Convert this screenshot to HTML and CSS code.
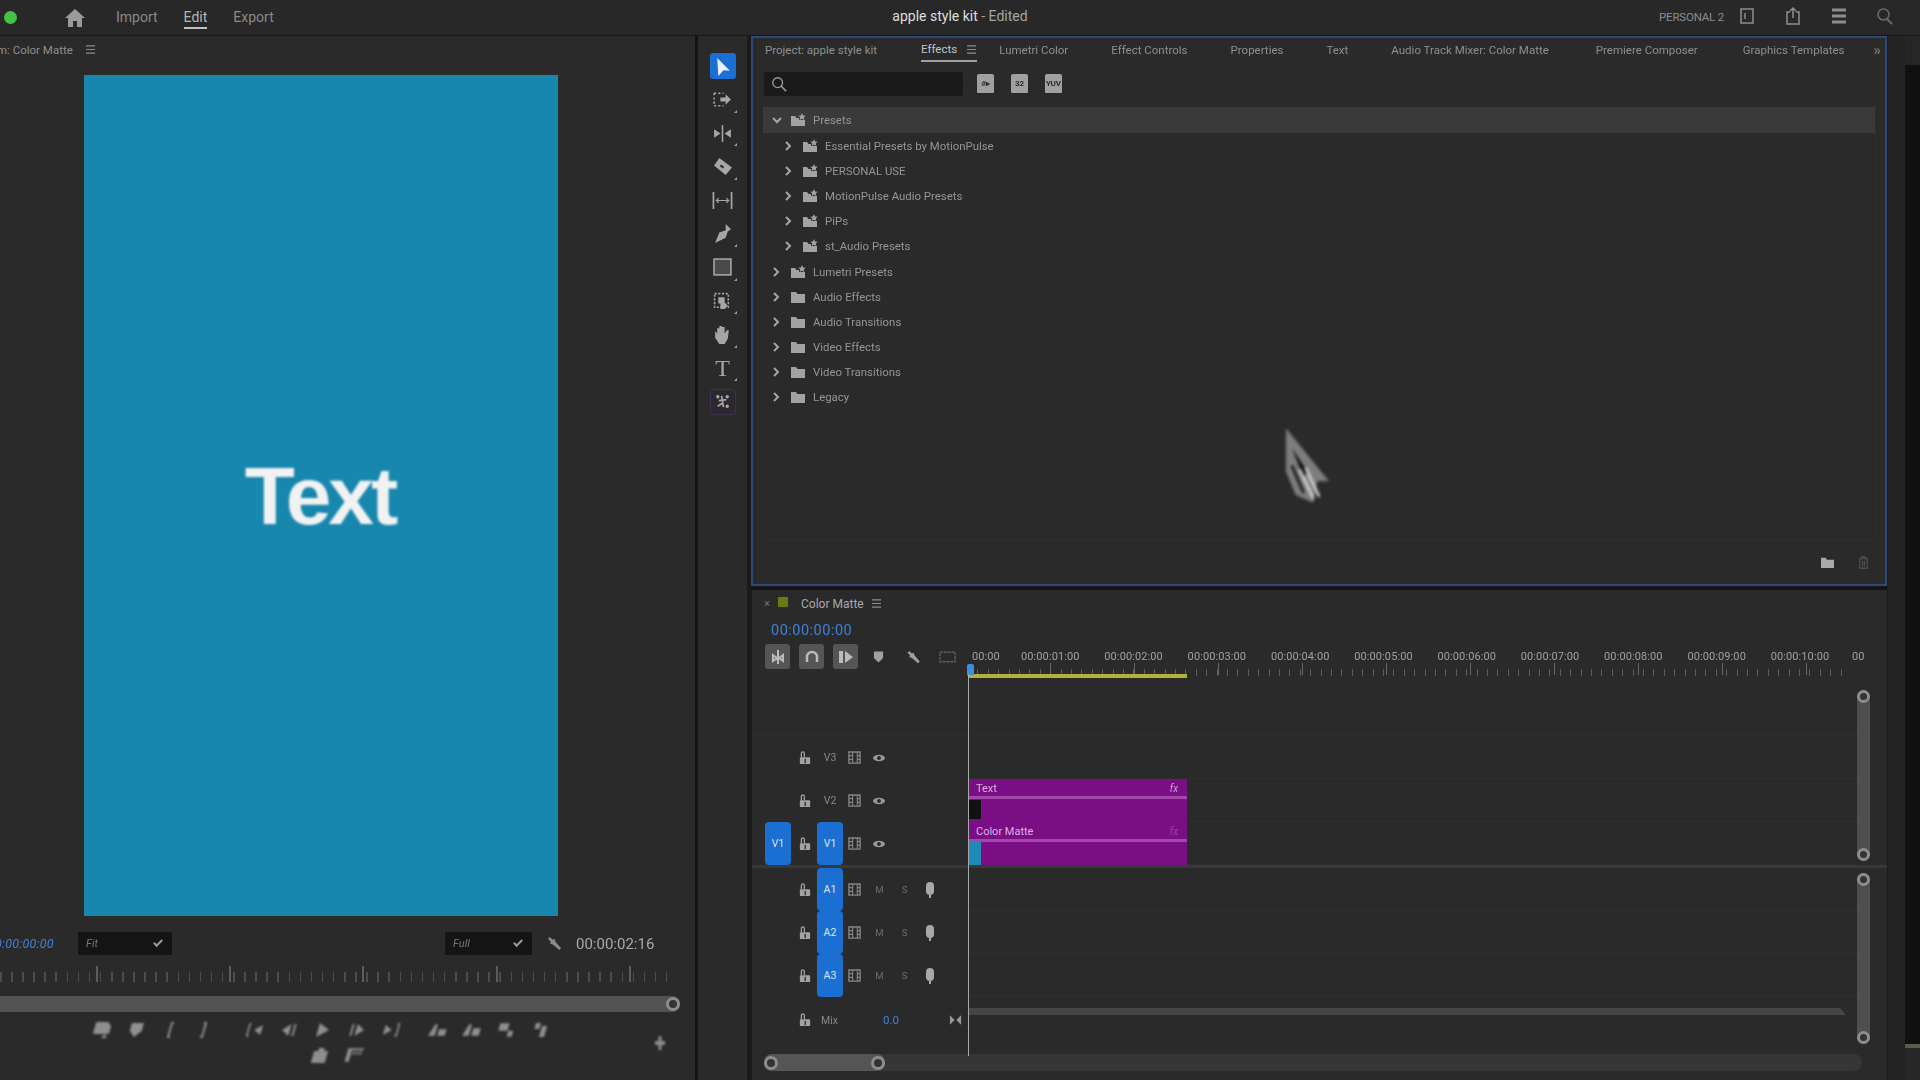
FILE: index.html
```html
<!DOCTYPE html>
<html lang="en">
<head>
    <meta charset="UTF-8">
    <title>apple style kit - Edited</title>
    <link rel="stylesheet" href="styles.css">
</head>
<body>
    <svg class="defs" width="0" height="0">
        <symbol id="i-folder" viewBox="0 0 16 14"><path d="M1 2h5l1.500 2H15v9H1z" fill="currentColor"/></symbol>
        <symbol id="i-starfolder" viewBox="0 0 16 14"><path d="M1 3h4l1.500 2H9v2h6v6H1z" fill="currentColor"/><path d="M12 0l1.100 2.400 2.600.3-1.900 1.700.5 2.600-2.300-1.300-2.300 1.300.5-2.600-1.900-1.700 2.600-.3z" fill="currentColor"/></symbol>
        <symbol id="i-right" viewBox="0 0 10 12"><path d="M3 2l4 4-4 4" fill="none" stroke="currentColor" stroke-width="2"/></symbol>
        <symbol id="i-down" viewBox="0 0 12 10"><path d="M2 3l4 4 4-4" fill="none" stroke="currentColor" stroke-width="2"/></symbol>
        <symbol id="i-lock" viewBox="0 0 14 16"><path d="M2 2.500a2.500 2.500 0 0 1 5 0V7H5.500V2.500a1 1 0 0 0-2 0V7H2z" fill="currentColor"/><rect x="1" y="7" width="12" height="8" rx="1" fill="currentColor"/><rect x="6.500" y="9" width="1.500" height="5" fill="#2a2a2a"/></symbol>
        <symbol id="i-film" viewBox="0 0 14 14"><path d="M1 1h12v12H1z" fill="none" stroke="currentColor" stroke-width="1.500"/><path d="M5 1v12M10 1v12M1 5h4M1 9h4M10 5h3M10 9h3" stroke="currentColor" stroke-width="1.200"/></symbol>
        <symbol id="i-eye" viewBox="0 0 16 10"><path d="M1 5c2-5 12-5 14 0-2 5-12 5-14 0z" fill="currentColor"/><circle cx="8" cy="5" r="2.200" fill="#2a2a2a"/></symbol>
        <symbol id="i-mic" viewBox="0 0 10 16"><rect x="1" y="0" width="8" height="13" rx="4" fill="currentColor"/><rect x="4" y="13" width="2" height="3" fill="currentColor"/></symbol>
        <symbol id="i-wrench" viewBox="0 0 16 16"><path d="M2 1l3 3 2-1 1 3 6 7-2 2-7-6-3-1 1-2-3-3z" fill="currentColor"/></symbol>
        <symbol id="i-menu" viewBox="0 0 12 10"><path d="M1 1h10M1 5h10M1 9h10" stroke="currentColor" stroke-width="1.200"/></symbol>
    </svg>

    <div class="app">
        <header class="topbar">
            <div class="topbar-left">
                <span class="dot"></span>
                <svg class="home" viewBox="0 0 20 18"><path d="M10 0L0 9h3v9h5v-6h4v6h5V9h3z" fill="currentColor"/></svg>
                <nav class="modes">
                    <span>Import</span>
                    <span class="active">Edit</span>
                    <span>Export</span>
                </nav>
            </div>
            <div class="doc-title"><b>apple style kit</b> - Edited</div>
            <div class="topbar-right">
                <span class="workspace">PERSONAL 2</span>
                <svg class="top-icon" viewBox="0 0 18 18"><rect x="3" y="2" width="12" height="14" fill="none" stroke="currentColor" stroke-width="1.500"/><path d="M7 6v6" stroke="currentColor" stroke-width="1.500"/></svg>
                <svg class="top-icon" viewBox="0 0 18 18"><path d="M6 5H3v12h12V5h-3" fill="none" stroke="currentColor" stroke-width="1.500"/><path d="M9 11V1M6 4l3-3 3 3" fill="none" stroke="currentColor" stroke-width="1.500"/></svg>
                <svg class="top-icon" viewBox="0 0 18 16"><path d="M2 2h14M2 8h14M2 14h14" stroke="currentColor" stroke-width="2.800"/></svg>
                <svg class="top-icon search-top" viewBox="0 0 18 18"><circle cx="7.500" cy="7.500" r="5.500" fill="none" stroke="currentColor" stroke-width="1.500"/><path d="M11 12l5 5" stroke="currentColor" stroke-width="2"/></svg>
            </div>
        </header>

        <main class="workspace-area">
            <section class="monitor">
                <div class="monitor-tab">
                    <span>m: Color Matte</span>
                    <svg class="menu"><use href="#i-menu"/></svg>
                </div>
                <div class="video-wrap">
                    <div class="video"><span>Text</span></div>
                </div>
                <div class="monitor-controls">
                    <span class="tc-left">00:00:00:00</span>
                    <span class="drop fit">Fit <i></i></span>
                    <span class="drop full">Full <i></i></span>
                    <svg class="mini-wrench"><use href="#i-wrench"/></svg>
                    <span class="tc-right">00:00:02:16</span>
                </div>
                <div class="monitor-ruler"></div>
                <div class="monitor-scroll"><span class="knob"></span></div>
                <div class="transport">
                    <div class="transport-row">
                        <span class="t-cell"><svg viewBox="0 0 20 18"><path d="M2 1h12l4 4v8H2z" fill="currentColor"/><path d="M14 13l3 4h-6z" fill="currentColor"/></svg></span>
                        <span class="t-cell"><svg viewBox="0 0 20 18"><path d="M4 2h12v8l-6 6-6-6z" fill="currentColor"/></svg></span>
                        <span class="t-cell"><svg viewBox="0 0 20 18"><path d="M12 1H9v16h3v-2h-1V3h1z" fill="currentColor"/></svg></span>
                        <span class="t-cell"><svg viewBox="0 0 20 18"><path d="M8 1h3v16H8v-2h1V3H8z" fill="currentColor"/></svg></span>
                        <span class="t-gap"></span>
                        <span class="t-cell"><svg viewBox="0 0 24 18"><path d="M6 1H3v16h3v-2H5V3h1zM20 3v12l-9-6z" fill="currentColor"/></svg></span>
                        <span class="t-cell"><svg viewBox="0 0 20 18"><path d="M11 3v12L3 9zM14 3h2v12h-2z" fill="currentColor"/></svg></span>
                        <span class="t-cell"><svg viewBox="0 0 20 18"><path d="M5 2l11 7-11 7z" fill="currentColor"/></svg></span>
                        <span class="t-cell"><svg viewBox="0 0 20 18"><path d="M9 3v12l8-6zM4 3h2v12H4z" fill="currentColor"/></svg></span>
                        <span class="t-cell"><svg viewBox="0 0 24 18"><path d="M18 1h3v16h-3v-2h1V3h-1zM4 3v12l9-6z" fill="currentColor"/></svg></span>
                        <span class="t-gap small"></span>
                        <span class="t-cell"><svg viewBox="0 0 24 18"><path d="M2 16l5-14h3v14zM13 8h9v8h-9z" fill="currentColor"/></svg></span>
                        <span class="t-cell"><svg viewBox="0 0 24 18"><path d="M2 16l5-14h3v14zM13 7h9v9h-9z" fill="currentColor"/></svg></span>
                        <span class="t-cell"><svg viewBox="0 0 24 18"><path d="M3 1h11v9H3zM15 10h6v7h-6z" fill="currentColor"/></svg></span>
                        <span class="t-cell"><svg viewBox="0 0 20 18"><path d="M4 2h5v6H4zM11 5h5v11h-5z" fill="currentColor"/></svg></span>
                    </div>
                    <div class="transport-row second">
                        <span class="t-cell"><svg viewBox="0 0 20 18"><path d="M3 5h14v12H3zM7 2h6v3H7z" fill="currentColor"/></svg></span>
                        <span class="t-cell"><svg viewBox="0 0 24 18"><path d="M3 1h5v16H3zM8 1h14v2H8zM10 4h2v5h-2zM14 4h2v5h-2zM18 4h2v5h-2z" fill="currentColor"/></svg></span>
                    </div>
                    <span class="t-plus"></span>
                </div>
            </section>

            <aside class="tools">
                <span class="tool selected"><svg viewBox="0 0 18 18"><path d="M4 1l12 12-6-.5L5 18z" fill="currentColor"/></svg></span>
                <span class="tool more-tools"><svg viewBox="0 0 20 18"><path d="M2 3h9M2 15h9M2 3v12" fill="none" stroke="currentColor" stroke-width="1.500" stroke-dasharray="2 2"/><path d="M8 7h5V4l5 5-5 5v-3H8z" fill="currentColor"/></svg></span>
                <span class="tool more-tools"><svg viewBox="0 0 20 18"><path d="M10 1v16" stroke="currentColor" stroke-width="1.500"/><path d="M8 9L2 5v8zM12 9l6-4v8z" fill="currentColor"/></svg></span>
                <span class="tool more-tools"><svg viewBox="0 0 20 18"><path d="M7 1l12 9-6 7-11-9z" fill="currentColor"/><path d="M8 8l3 2" stroke="#2a2a2a" stroke-width="2"/></svg></span>
                <span class="tool"><svg viewBox="0 0 22 18"><path d="M1.500 0v18M20.500 0v18" stroke="currentColor" stroke-width="1.800"/><path d="M5 9h12M7 6.500L4.500 9 7 11.500M15 6.500L17.500 9 15 11.500" fill="none" stroke="currentColor" stroke-width="1.200"/></svg></span>
                <span class="tool more-tools"><svg viewBox="0 0 18 18"><path d="M12 0l5 5-3 2-2 6-10 5 4-10 6-2z" fill="currentColor"/></svg></span>
                <span class="tool more-tools"><svg viewBox="0 0 18 18"><rect x="1" y="1" width="16" height="15" fill="#4a4a4a" stroke="currentColor" stroke-width="1.500"/></svg></span>
                <span class="tool more-tools"><svg viewBox="0 0 18 18"><rect x="1.500" y="1.500" width="13" height="13" fill="none" stroke="currentColor" stroke-width="1.500" stroke-dasharray="2 1.500"/><path d="M5 5h6v5l3 3-3 3H7V11H5z" fill="currentColor"/></svg></span>
                <span class="tool more-tools"><svg viewBox="0 0 18 18"><path d="M2 10V6l2 2V3h2v4V1h2.500v6V2H11v6l2-3h2l-1 8-3 5H6L2 12z" fill="currentColor"/></svg></span>
                <span class="tool type-tool more-tools">T</span>
                <span class="tool tool-last"><svg viewBox="0 0 18 18"><circle cx="4" cy="4" r="1.800" fill="currentColor"/><circle cx="14" cy="4" r="1.800" fill="currentColor"/><circle cx="14" cy="14" r="1.800" fill="currentColor"/><path d="M8 3l2 12M5 8l8-1M10 10l-6 4" fill="none" stroke="currentColor" stroke-width="1.800"/></svg></span>
            </aside>

            <div class="right-col">
                <section class="effects">
                    <div class="tabs">
                        <span>Project: apple style kit</span>
                        <span class="tab-active">Effects <svg class="menu"><use href="#i-menu"/></svg></span>
                        <span>Lumetri Color</span>
                        <span>Effect Controls</span>
                        <span>Properties</span>
                        <span>Text</span>
                        <span>Audio Track Mixer: Color Matte</span>
                        <span class="tab-pc">Premiere Composer</span>
                        <span class="tab-gt">Graphics Templates</span>
                        <span class="more">»</span>
                    </div>
                    <div class="search-row">
                        <div class="search-box">
                            <svg viewBox="0 0 18 18"><circle cx="7.500" cy="7.500" r="5.500" fill="none" stroke="currentColor" stroke-width="1.500"/><path d="M11.500 11.500L17 17" stroke="currentColor" stroke-width="1.800"/></svg>
                        </div>
                        <span class="badge">#▸</span>
                        <span class="badge">32</span>
                        <span class="badge">YUV</span>
                    </div>
                    <div class="tree">
                        <div class="row open"><svg class="chev"><use href="#i-down"/></svg><svg class="fld"><use href="#i-starfolder"/></svg>Presets</div>
                        <div class="row sub"><svg class="chev"><use href="#i-right"/></svg><svg class="fld"><use href="#i-starfolder"/></svg>Essential Presets by MotionPulse</div>
                        <div class="row sub"><svg class="chev"><use href="#i-right"/></svg><svg class="fld"><use href="#i-starfolder"/></svg>PERSONAL USE</div>
                        <div class="row sub"><svg class="chev"><use href="#i-right"/></svg><svg class="fld"><use href="#i-starfolder"/></svg>MotionPulse Audio Presets</div>
                        <div class="row sub"><svg class="chev"><use href="#i-right"/></svg><svg class="fld"><use href="#i-starfolder"/></svg>PiPs</div>
                        <div class="row sub"><svg class="chev"><use href="#i-right"/></svg><svg class="fld"><use href="#i-starfolder"/></svg>st_Audio Presets</div>
                        <div class="row"><svg class="chev"><use href="#i-right"/></svg><svg class="fld"><use href="#i-starfolder"/></svg>Lumetri Presets</div>
                        <div class="row"><svg class="chev"><use href="#i-right"/></svg><svg class="fld"><use href="#i-folder"/></svg>Audio Effects</div>
                        <div class="row"><svg class="chev"><use href="#i-right"/></svg><svg class="fld"><use href="#i-folder"/></svg>Audio Transitions</div>
                        <div class="row"><svg class="chev"><use href="#i-right"/></svg><svg class="fld"><use href="#i-folder"/></svg>Video Effects</div>
                        <div class="row"><svg class="chev"><use href="#i-right"/></svg><svg class="fld"><use href="#i-folder"/></svg>Video Transitions</div>
                        <div class="row"><svg class="chev"><use href="#i-right"/></svg><svg class="fld"><use href="#i-folder"/></svg>Legacy</div>
                    </div>
                    <div class="effects-foot">
                        <svg class="foot-icon"><use href="#i-folder"/></svg>
                        <svg class="foot-icon dim" viewBox="0 0 12 14"><path d="M1 3h10M4 3V1h4v2M2 3v10h8V3M5 5v6M7 5v6" fill="none" stroke="currentColor" stroke-width="1.200"/></svg>
                    </div>
                    <!-- mouse pointer caught mid move -->
                    <svg class="pointer" viewBox="0 0 48 80">
                        <path d="M2 2L46 56 34 56 30 78 12 70 2 46z" fill="#7d7d7d"/>
                        <path d="M8 22L24 46 20 52z" fill="#0e0e0e"/>
                        <path d="M16 44L30 74M22 42L36 72" stroke="#dedede" stroke-width="2.500"/>
                        <path d="M8 40L20 68" stroke="#1b1b1b" stroke-width="3"/>
                    </svg>
                </section>

                <section class="timeline">
                    <span class="playhead-line"></span>
                    <div class="seq-tab">
                        <span class="close">×</span>
                        <span class="swatch"></span>
                        <span class="seq-name">Color Matte</span>
                        <svg class="menu"><use href="#i-menu"/></svg>
                    </div>
                    <div class="seq-tc">00:00:00:00</div>
                    <div class="seq-bar">
                        <div class="seq-tools">
                            <span class="seq-btn"><svg viewBox="0 0 16 16"><path d="M8 1v14M3 6l4 3-4 3zM13 6L9 9l4 3z" fill="none" stroke="currentColor" stroke-width="2"/></svg></span>
                            <span class="seq-btn"><svg viewBox="0 0 16 16"><path d="M3 13V8a5 5 0 0 1 10 0v5" fill="none" stroke="currentColor" stroke-width="2.500"/></svg></span>
                            <span class="seq-btn"><svg viewBox="0 0 16 16"><path d="M1 2h4v12H1zM7 2l8 6-8 6z" fill="currentColor"/></svg></span>
                            <svg class="seq-ico marker" viewBox="0 0 12 14"><path d="M1 1h10v7l-5 5-5-5z" fill="currentColor"/></svg>
                            <svg class="seq-ico wrench"><use href="#i-wrench"/></svg>
                            <svg class="seq-ico cc" viewBox="0 0 18 12"><rect x="1" y="1" width="16" height="10" fill="none" stroke="currentColor" stroke-width="1.500" stroke-dasharray="3 1"/></svg>
                        </div>
                        <div class="ruler">
                            <div class="ruler-labels">
                                <span class="first">00:00</span>
                                <span>00:00:01:00</span>
                                <span>00:00:02:00</span>
                                <span>00:00:03:00</span>
                                <span>00:00:04:00</span>
                                <span>00:00:05:00</span>
                                <span>00:00:06:00</span>
                                <span>00:00:07:00</span>
                                <span>00:00:08:00</span>
                                <span>00:00:09:00</span>
                                <span>00:00:10:00</span>
                                <span class="last">00</span>
                            </div>
                            <div class="ticks"><span class="in-out"></span><span class="head"></span></div>
                        </div>
                    </div>

                    <div class="track-group video-tracks">
                        <div class="rows">
                            <div class="empty-track"></div>
                            <div class="track">
                                <div class="head"><span class="src"></span><svg class="lock"><use href="#i-lock"/></svg><span class="tname">V3</span><svg class="sync"><use href="#i-film"/></svg><svg class="eye"><use href="#i-eye"/></svg></div>
                                <div class="lane"></div>
                            </div>
                            <div class="track">
                                <div class="head"><span class="src"></span><svg class="lock"><use href="#i-lock"/></svg><span class="tname">V2</span><svg class="sync"><use href="#i-film"/></svg><svg class="eye"><use href="#i-eye"/></svg></div>
                                <div class="lane">
                                    <div class="clip"><div class="clip-title"><span>Text</span><em>fx</em></div><div class="clip-body"><span class="thumb black"></span></div></div>
                                </div>
                            </div>
                            <div class="track">
                                <div class="head"><span class="src on">V1</span><svg class="lock"><use href="#i-lock"/></svg><span class="tname on">V1</span><svg class="sync"><use href="#i-film"/></svg><svg class="eye"><use href="#i-eye"/></svg></div>
                                <div class="lane">
                                    <div class="clip"><div class="clip-title"><span>Color Matte</span><em class="faint">fx</em></div><div class="clip-body"><span class="thumb blue"></span></div></div>
                                </div>
                            </div>
                        </div>
                        <div class="vscroll v1"><span class="knob"></span><span class="knob"></span></div>
                    </div>

                    <div class="track-group audio-tracks">
                        <div class="rows">
                            <div class="track audio">
                                <div class="head"><span class="src"></span><svg class="lock"><use href="#i-lock"/></svg><span class="tname on">A1</span><svg class="sync"><use href="#i-film"/></svg><span class="ms">M</span><span class="ms">S</span><svg class="mic"><use href="#i-mic"/></svg></div>
                                <div class="lane"></div>
                            </div>
                            <div class="track audio">
                                <div class="head"><span class="src"></span><svg class="lock"><use href="#i-lock"/></svg><span class="tname on">A2</span><svg class="sync"><use href="#i-film"/></svg><span class="ms">M</span><span class="ms">S</span><svg class="mic"><use href="#i-mic"/></svg></div>
                                <div class="lane"></div>
                            </div>
                            <div class="track audio">
                                <div class="head"><span class="src"></span><svg class="lock"><use href="#i-lock"/></svg><span class="tname on">A3</span><svg class="sync"><use href="#i-film"/></svg><span class="ms">M</span><span class="ms">S</span><svg class="mic"><use href="#i-mic"/></svg></div>
                                <div class="lane"></div>
                            </div>
                            <div class="track mix">
                                <div class="head"><span class="src"></span><svg class="lock"><use href="#i-lock"/></svg><span class="tname">Mix</span><span class="mix-val">0.0</span><svg class="bow" viewBox="0 0 14 12"><path d="M1 1l5 5-5 5zM13 1L8 6l5 5z" fill="currentColor"/></svg></div>
                                <div class="lane"><span class="mix-bar"></span></div>
                            </div>
                        </div>
                        <div class="vscroll v2"><span class="knob"></span><span class="knob"></span></div>
                    </div>

                    <div class="hscroll">
                        <span class="hthumb"><span class="knob"></span><span class="knob"></span></span>
                    </div>
                </section>
            </div>

            <div class="dock"></div>
            <div class="far-right"><div class="far-dark"></div><div class="far-foot"></div></div>
        </main>
    </div>
</body>
</html>
```

FILE: styles.css
```css
:root {
  --panel: #2a2a2a;
  --panel-dark: #232323;
  --line: #313131;
  --gutter: #141414;
  --text: #9b9b9b;
  --icon: #a6a6a6;
  --blue: #1b6fd2;
  --tc-blue: #3f82d6;
  --focus: #2f4a78;
  --clip: #7a0f85;
}

* { box-sizing: border-box; }

body {
  margin: 0;
  width: 1920px;
  height: 1080px;
  overflow: hidden;
  background: var(--gutter);
  font-family: Roboto, "Liberation Sans", sans-serif;
  font-size: 12px;
  color: var(--text);
}

.defs { position: absolute; }

.app {
  width: 1920px;
  height: 1080px;
  display: flex;
  flex-direction: column;
  filter: blur(0.6px);
}

/* top bar */
.topbar {
  height: 36px;
  flex: none;
  display: grid;
  grid-template-columns: 1fr auto 1fr;
  align-items: center;
  background: #282828;
  border-bottom: 1px solid #141414;
}

.topbar-left { display: flex; align-items: center; }

.dot {
  width: 13px;
  height: 13px;
  margin-left: 4px;
  border-radius: 50%;
  background: #41c441;
}

.home { width: 20px; height: 18px; margin-left: 48px; color: #9a9a9a; }

.modes { display: flex; gap: 26px; margin-left: 31px; font-size: 14px; color: #8a8a8a; }
.modes span { line-height: 20px; }
.modes .active { color: #b5b5b5; border-bottom: 2px solid #c0c0c0; }

.doc-title { font-size: 14px; color: #a5a5a5; margin-top: -3px; }
.doc-title b { font-weight: 400; color: #dedede; }

.topbar-right { display: flex; align-items: center; justify-content: flex-end; }
.workspace { font-size: 11.500px; color: #8d8d8d; margin-right: 14px; letter-spacing: -0.2px; margin-top: -1px; }
.top-icon { width: 18px; height: 18px; margin-right: 28px; color: #8e8e8e; margin-top: -3px; }
.search-top { margin-right: 26px; color: #6b6b6b; }

.workspace-area { flex: 1; display: flex; min-height: 0; }

/* program monitor */
.monitor {
  width: 695px;
  flex: none;
  background: var(--panel);
  display: flex;
  flex-direction: column;
  overflow: hidden;
}

.monitor-tab {
  height: 39px;
  padding-bottom: 12px;
  display: flex;
  align-items: center;
  font-size: 11.500px;
  color: #8f8f8f;
}
.monitor-tab span { margin-left: -3px; width: 88px; white-space: nowrap; }
.menu { width: 11px; height: 9px; color: #8c8c8c; flex: none; }

.video-wrap { padding-left: 84px; }
.video {
  width: 474px;
  height: 841px;
  background: #1887ae;
  display: flex;
  align-items: center;
  justify-content: center;
}
.video span {
  font-family: "Liberation Sans", sans-serif;
  font-size: 82px;
  font-weight: 700;
  letter-spacing: -3px;
  color: #f2f2f2;
  filter: blur(0.8px);
  margin-right: 2px;
}

.monitor-controls {
  height: 23px;
  margin-top: 16px;
  display: flex;
  align-items: center;
  font-size: 12.500px;
  filter: blur(0.6px);
}
.tc-left { width: 78px; flex: none; color: var(--tc-blue); font-style: italic; margin-left: -12px; margin-right: 12px; white-space: nowrap; overflow: hidden; padding-right: 12px; letter-spacing: 0.2px; }
.drop {
  height: 23px;
  display: flex;
  align-items: center;
  justify-content: space-between;
  padding: 0 8px;
  background: #141414;
  font-size: 11px;
  font-style: italic;
  color: #777;
}
.drop i { width: 9px; height: 5px; border-left: 2px solid #999; border-bottom: 2px solid #999; transform: rotate(-45deg) translateY(-2px); }
.fit { width: 94px; }
.full { width: 87px; margin-left: 273px; }
.mini-wrench { width: 15px; height: 15px; margin-left: 16px; color: #8a8a8a; }
.tc-right { margin-left: 13px; font-size: 15px; color: #a8a8a8; white-space: nowrap; }

.monitor-ruler {
  height: 16px;
  margin-top: 11px;
  margin-right: 20px;
  background:
    repeating-linear-gradient(90deg, transparent 0 96px, #5c5c5c 96px 98px, transparent 98px 133.200px) 0 0 / 100% 16px,
    repeating-linear-gradient(90deg, #4c4c4c 0 1.500px, transparent 1.500px 11.100px) 0 6px / 100% 10px no-repeat;
}

.monitor-scroll {
  height: 16px;
  margin-top: 14px;
  margin-right: 15px;
  background: #525252;
  border-radius: 0 8px 8px 0;
  display: flex;
  justify-content: flex-end;
  align-items: center;
}

.knob {
  width: 14px;
  height: 14px;
  flex: none;
  border-radius: 50%;
  border: 3px solid #8d8d8d;
  background: #333;
}

.transport {
  position: relative;
  padding-top: 6px;
  filter: blur(1.200px);
}
.transport-row {
  display: flex;
  align-items: center;
  height: 24px;
  margin-left: 85px;
}
.transport-row.second { margin-left: 303px; margin-top: 1px; }
.t-cell {
  width: 34px;
  height: 18px;
  flex: none;
  display: flex;
  justify-content: center;
  color: #8f8f8f;
  transform: skewX(-16deg);
}
.t-cell svg { width: 20px; height: 18px; }
.t-gap { width: 17px; flex: none; }
.t-gap.small { width: 13px; }
.t-plus {
  position: absolute;
  left: 655px;
  top: 24px;
  width: 10px;
  height: 14px;
  background: #8b8b8b;
  clip-path: polygon(35% 0, 65% 0, 65% 35%, 100% 35%, 100% 65%, 65% 65%, 65% 100%, 35% 100%, 35% 65%, 0 65%, 0 35%, 35% 35%);
}

/* tool strip */
.tools {
  width: 53px;
  margin-left: 3px;
  flex: none;
  background: var(--panel);
  border-right: 4px solid #1a1a1a;
  display: flex;
  flex-direction: column;
  align-items: center;
  padding-top: 17px;
  gap: 7.600px;
}
.tool {
  position: relative;
  width: 26px;
  height: 26px;
  flex: none;
  display: flex;
  align-items: center;
  justify-content: center;
  color: var(--icon);
  border-radius: 3px;
}
.tool svg { width: 21px; height: 19px; }
.tool.selected { background: var(--blue); color: #e8f0fb; }
.more-tools::after {
  content: "";
  position: absolute;
  right: -1px;
  bottom: 0;
  border-left: 3px solid transparent;
  border-bottom: 3px solid #a0a0a0;
}
.type-tool { font-family: "Liberation Serif", serif; font-size: 24px; }
.tool-last { border: 1px solid #3c2f55; background: #2b2830; }
.tool-last svg { width: 17px; height: 17px; }

/* right column */
.right-col { width: 1136px; flex: none; display: flex; flex-direction: column; }

.effects {
  position: relative;
  height: 550px;
  flex: none;
  background: var(--panel);
  border: 2px solid var(--focus);
  display: flex;
  flex-direction: column;
}

.pointer {
  position: absolute;
  left: 531px;
  top: 388px;
  width: 47px;
  height: 79px;
  filter: blur(1.500px);
}

.tabs {
  height: 30px;
  flex: none;
  padding-bottom: 6px;
  display: flex;
  align-items: center;
  gap: 43px;
  padding-left: 12px;
  font-size: 11.500px;
  white-space: nowrap;
  color: #8f8f8f;
}
.tab-active {
  display: flex;
  align-items: center;
  gap: 9px;
  height: 23px;
  margin-left: 1px;
  margin-right: -21px;
  color: #c4c4c4;
  border-bottom: 2px solid #a0a0a0;
}
.tab-pc { margin-left: 4px; }
.tab-gt { margin-left: 2px; }
.more { margin-left: -14px; color: #777; font-size: 15px; font-weight: 700; }

.search-row {
  height: 25px;
  margin-top: 3px;
  flex: none;
  display: flex;
  align-items: center;
  padding-left: 11px;
}
.search-box {
  width: 199px;
  height: 24px;
  background: #1a1a1a;
  border-radius: 2px;
  display: flex;
  align-items: center;
  padding-left: 7px;
  color: #9a9a9a;
}
.search-box svg { width: 16px; height: 16px; }
.badge {
  width: 17px;
  height: 19px;
  margin-left: 17px;
  background: #a0a0a0;
  color: #2a2a2a;
  border-radius: 2px 2px 1px 1px;
  font-size: 8px;
  line-height: 19px;
  text-align: center;
  font-weight: 700;
  overflow: hidden;
}
.search-row .badge:nth-child(2) { margin-left: 14px; }
.badge + .badge { margin-left: 17px; }

.tree {
  flex: 1;
  margin: 11px 9px 0 10px;
  border-bottom: 1px solid #2f2f2f;
  border-right: 1px solid #2f2f2f;
}
.row {
  height: 25.200px;
  display: flex;
  align-items: center;
  font-size: 11.400px;
  color: #959595;
  padding-left: 8px;
  white-space: nowrap;
}
.row.open { background: #3a3a3a; height: 26px; }
.row.sub { padding-left: 20px; }
.chev { width: 10px; height: 12px; color: #a5a5a5; flex: none; }
.row.open .chev { width: 12px; height: 10px; margin-right: -2px; }
.fld { width: 16px; height: 14px; margin: 0 7px 0 9px; color: #a2a2a2; flex: none; }

.effects-foot {
  height: 44px;
  flex: none;
  display: flex;
  align-items: center;
  justify-content: flex-end;
  gap: 21px;
  padding-right: 14px;
}
.foot-icon { width: 15px; height: 13px; color: #a8a8a8; }
.foot-icon.dim { color: #555; }

/* timeline */
.timeline {
  position: relative;
  flex: 1;
  margin-top: 4px;
  background: var(--panel);
  display: flex;
  flex-direction: column;
  min-height: 0;
  border-left: 1px solid #1a1a1a;
}
.playhead-line {
  position: absolute;
  left: 216px;
  top: 84px;
  bottom: 24px;
  width: 1px;
  background: #a8a8a8;
  z-index: 3;
}

.seq-tab { height: 27px; display: flex; align-items: center; font-size: 12px; padding-left: 12px; }
.close { width: 14px; font-size: 11px; color: #777; }
.swatch { width: 10px; height: 10px; background: #6a7a12; margin-top: -4px; }
.seq-name { margin-left: 13px; margin-right: 7px; color: #a8a8a8; }

.seq-tc { height: 27px; padding-left: 19px; font-size: 14.500px; line-height: 27px; letter-spacing: 0.500px; color: var(--tc-blue); }

.seq-bar { height: 36px; flex: none; display: flex; }
.seq-tools { width: 215px; flex: none; display: flex; align-items: flex-start; padding-left: 13px; gap: 9px; }
.seq-btn {
  width: 25px;
  height: 25px;
  background: #555;
  border-radius: 3px;
  display: flex;
  align-items: center;
  justify-content: center;
  color: #bbb;
}
.seq-btn svg { width: 16px; height: 16px; }
.seq-ico { height: 14px; color: #a0a0a0; margin-top: 6px; }
.seq-ico.marker { width: 11px; margin-left: 6px; }
.seq-ico.wrench { width: 15px; margin-left: 14px; }
.seq-ico.cc { width: 17px; margin-left: 8px; color: #606060; }

.ruler { flex: 1; min-width: 0; overflow: hidden; }
.ruler-labels { height: 19px; display: flex; font-size: 11px; color: #a0a0a0; white-space: nowrap; letter-spacing: 0.100px; padding-top: 6px; }
.ruler-labels span { width: 83.300px; flex: none; }
.ruler-labels .first { width: 54px; padding-left: 5px; }
.ruler-labels .last { width: 14px; margin-left: -2px; overflow: hidden; }
.ticks {
  position: relative;
  height: 17px;
  margin-right: 37px;
  background:
    repeating-linear-gradient(90deg, transparent 0 83px, #666 83px 84px, transparent 84px 83.400px) 0 0 / 100% 12px no-repeat,
    repeating-linear-gradient(90deg, #5c5c5c 0 1px, transparent 1px 10.400px) 0 6px / 100% 7px no-repeat;
}
.in-out { position: absolute; left: 1px; top: 11px; width: 219px; height: 4px; background: #b3b13c; }
.ticks .head { position: absolute; left: 0; top: 1px; width: 7px; height: 11px; background: #3b8fe0; border-radius: 2px 2px 0 0; }

.track-group { display: flex; }
.rows { width: 1105px; flex: none; }
.vscroll {
  width: 13px;
  background: #4e4e4e;
  border-radius: 7px;
  display: flex;
  flex-direction: column;
  justify-content: space-between;
  align-items: center;
}
.vscroll .knob { width: 13px; height: 13px; }
.vscroll.v1 { margin-top: 10px; margin-bottom: 4px; }
.vscroll.v2 { margin-top: 5px; margin-bottom: -1px; }

.empty-track { height: 56px; border-bottom: 1px solid #2e2e2e; }
.video-tracks { border-bottom: 3px solid #383838; }

.track { height: 43px; display: flex; }
.track .head { width: 216px; flex: none; display: flex; align-items: center; font-size: 10.500px; color: #888; padding-left: 13px; }
.lane { flex: 1; border-bottom: 1px solid #2f2f2f; }
.src {
  width: 26px;
  height: 43px;
  flex: none;
  display: flex;
  align-items: center;
  justify-content: center;
  border-radius: 4px;
  margin-right: 8px;
}
.src.on { background: var(--blue); color: #dbe8fb; }
.lock { width: 12px; height: 14px; color: #a2a2a2; flex: none; }
.tname { width: 26px; height: 43px; flex: none; margin-left: 6px; display: flex; align-items: center; justify-content: center; border-radius: 4px; }
.tname.on { background: var(--blue); color: #dbe8fb; }
.sync { width: 13px; height: 13px; margin-left: 5px; color: #858585; flex: none; }
.eye { width: 14px; height: 10px; margin-left: 11px; color: #999; flex: none; }
.ms { width: 13px; margin-left: 12px; margin-right: 0; font-size: 9.500px; color: #6e6e6e; text-align: center; }
.mic { width: 10px; height: 16px; margin-left: 14px; color: #a8a8a8; flex: none; }

.clip { width: 219px; height: 43px; background: var(--clip); display: flex; flex-direction: column; }
.clip-title {
  height: 20px;
  flex: none;
  display: flex;
  align-items: center;
  justify-content: space-between;
  padding: 2px 9px 0 8px;
  font-size: 11px;
  color: #dcb0e0;
  border-bottom: 3px solid #a248ab;
}
.clip-title em { font-size: 10px; color: #d8a0dd; }
.clip-title em.faint { color: #96459f; }
.clip-body { flex: 1; display: flex; }
.thumb { width: 13px; height: 100%; }
.thumb.black { background: #111; height: 19px; margin-top: 1px; }
.thumb.blue { background: #1e8ab5; }

.audio .src { background: transparent; }
.mix .tname { width: 32px; justify-content: flex-start; padding-left: 4px; }
.mix-val { margin-left: 20px; width: 44px; color: var(--tc-blue); font-size: 11.500px; text-align: center; }
.bow { width: 13px; height: 12px; margin-left: 36px; color: #999; }
.mix .lane { border: 0; padding-top: 11px; }
.mix-bar { display: block; height: 7px; background: #464646; clip-path: polygon(0 0, 99.300% 0, 100% 100%, 0 100%); width: 878px; }
.track.mix { height: 46px; }

.hscroll {
  height: 17px;
  margin: 11px 25px 0 12px;
  background: #363636;
  border-radius: 8px;
}
.hthumb {
  width: 121px;
  height: 17px;
  display: flex;
  justify-content: space-between;
  align-items: center;
  background: #555;
  border-radius: 8px;
}
.hthumb .knob { width: 14px; height: 14px; }

.dock { width: 18px; flex: none; background: var(--panel-dark); border-left: 1px solid #1d1d1d; }
.far-right { flex: 1; display: flex; flex-direction: column; background: #262626; }
.far-dark { flex: 1; margin-top: 29px; background: #101010; }
.far-foot { height: 36px; background: #272727; border-top: 4px solid #5c5c48; }
```
